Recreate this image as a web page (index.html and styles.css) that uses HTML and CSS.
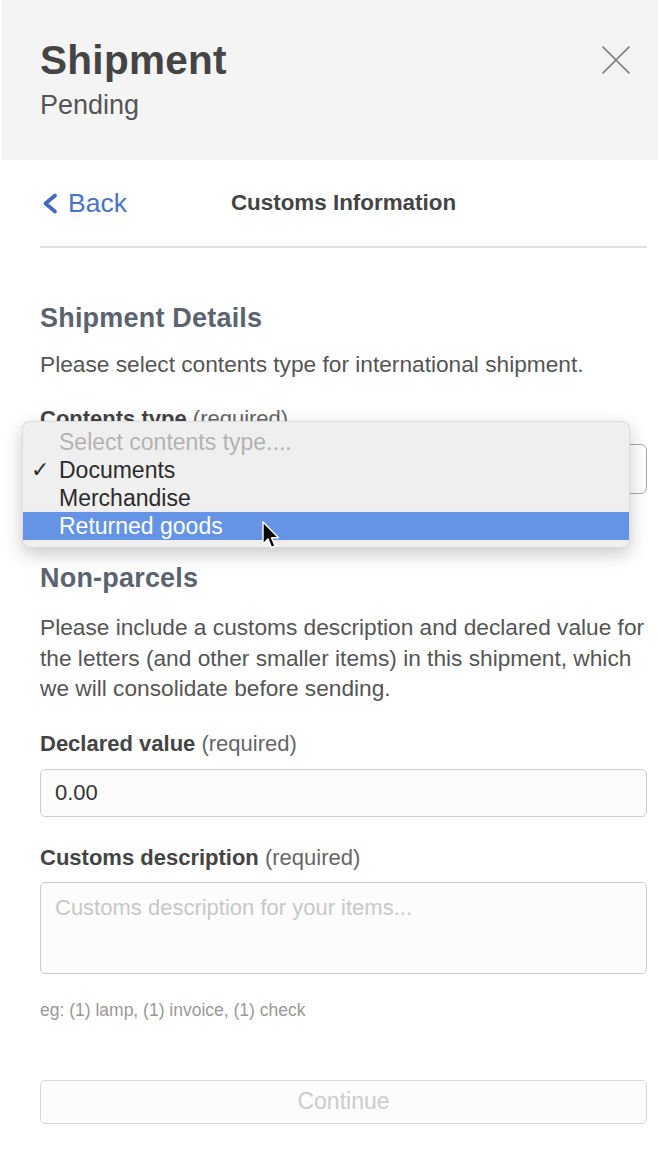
FILE: index.html
```html
<!DOCTYPE html>
<html>
<head>
    <meta charset="UTF-8">
    <title>Shipment - Customs Information</title>
    <link rel="stylesheet" href="styles.css">
</head>
<body>
    <div class="header">
        <div>
            <h1>Shipment</h1>
            <div class="status">Pending</div>
        </div>
        <svg class="close" width="30" height="30" viewBox="0 0 30 30">
            <path d="M1.5 1.5 L28.5 28.5 M28.5 1.5 L1.5 28.5" stroke="#777" stroke-width="1.6" fill="none"/>
        </svg>
    </div>

    <div class="main">
        <div class="nav">
            <a class="back" href="#">
                <svg width="17" height="21" viewBox="0 0 17 21">
                    <polyline points="14,2.5 4.5,10.5 14,18.5" stroke="#3f68c0" stroke-width="3.6" fill="none" stroke-linecap="round" stroke-linejoin="round"/>
                </svg>
                Back
            </a>
            <div class="nav-title">Customs Information</div>
            <div></div>
        </div>

        <h2>Shipment Details</h2>
        <p class="intro">Please select contents type for international shipment.</p>

        <div class="field field-select">
            <label><b>Contents type</b> (required)</label>
            <div class="select-box"></div>

            <!-- open native dropdown -->
            <div class="menu">
                <div class="menu-item placeholder">Select contents type....</div>
                <div class="menu-item"><span class="check">✓</span>Documents</div>
                <div class="menu-item">Merchandise</div>
                <div class="menu-item active">Returned goods</div>
                <svg class="cursor" width="19" height="29" viewBox="0 0 19 29">
                    <path d="M1 1 L1 23 L6 18 L9.5 26.5 L13 25 L9.5 16.8 L16.5 16.8 Z" fill="#000" stroke="#fff" stroke-width="1.4" stroke-linejoin="round"/>
                </svg>
            </div>
        </div>

        <h2 class="second">Non-parcels</h2>
        <p class="intro long">Please include a customs description and declared value for the letters (and other smaller items) in this shipment, which we will consolidate before sending.</p>

        <div class="field">
            <label><b>Declared value</b> (required)</label>
            <input class="input" type="text" value="0.00">
        </div>

        <div class="field field-desc">
            <label><b>Customs description</b> (required)</label>
            <textarea class="input textarea" placeholder="Customs description for your items..."></textarea>
        </div>
        <div class="hint">eg: (1) lamp, (1) invoice, (1) check</div>

        <button class="continue" disabled>Continue</button>
    </div>
</body>
</html>
```

FILE: styles.css
```css
body {
    margin: 0;
    font-family: "Liberation Sans", Arial, Helvetica, sans-serif;
    color: #555;
    background: #fff;
}
.header {
    margin-left: 2px;
    height: 160px;
    box-sizing: border-box;
    padding: 37px 27px 0 38px;
    background: #f4f4f4;
    display: flex;
    justify-content: space-between;
    align-items: flex-start;
}
.header h1 {
    margin: 0;
    font-size: 40.5px;
    line-height: 46px;
    color: #444;
    letter-spacing: 0.3px;
}
.status {
    margin-top: 7px;
    font-size: 27px;
    line-height: 30px;
    color: #555;
}
.close {
    margin-top: 8px;
}
.main {
    padding: 0 11px 0 40px;
}
.nav {
    height: 86px;
    display: grid;
    grid-template-columns: 1fr auto 1fr;
    align-items: center;
    border-bottom: 2px solid #e0e0e0;
}
.back {
    display: flex;
    align-items: center;
    gap: 10px;
    margin-left: 1px;
    font-size: 26.5px;
    color: #4a72c6;
    text-decoration: none;
}
.nav-title {
    font-size: 22.4px;
    font-weight: bold;
    color: #444;
}
h2 {
    margin: 53px 0 0;
    font-size: 27px;
    line-height: 34px;
    color: #5b6371;
    letter-spacing: 0.2px;
}
h2.second {
    margin-top: 68px;
    line-height: 32px;
}
.intro {
    margin: 14px 0 0;
    font-size: 22.7px;
    line-height: 30px;
    color: #555;
}
.intro.long {
    margin-top: 18px;
    line-height: 30.5px;
}
.field {
    margin-top: 27px;
}
.field-select {
    position: relative;
    margin-top: 27px;
}
.field-desc {
    margin-top: 28px;
}
label {
    display: block;
    font-size: 22px;
    line-height: 26px;
    color: #666;
}
label b {
    color: #444;
}
.select-box {
    margin-top: 12px;
    height: 50px;
    box-sizing: border-box;
    border: 1px solid #aaa;
    border-radius: 6px;
    background: #fff;
}
.input {
    display: block;
    width: 100%;
    box-sizing: border-box;
    margin-top: 12px;
    height: 48px;
    padding: 0 14px;
    border: 1px solid #ccc;
    border-radius: 5px;
    background: #fcfcfc;
    font-family: inherit;
    font-size: 22px;
    color: #333;
}
.textarea {
    margin-top: 11px;
    height: 92px;
    padding: 12px 14px;
    resize: none;
}
.textarea::placeholder {
    color: #c8c8c8;
}
.hint {
    margin-top: 26px;
    font-size: 17.5px;
    line-height: 20px;
    color: #999;
}
.continue {
    display: block;
    width: 100%;
    margin-top: 60px;
    height: 44px;
    border: 1px solid #d8d8d8;
    border-radius: 5px;
    background: #fcfcfc;
    font-family: inherit;
    font-size: 23px;
    color: #ccc;
}
.menu {
    position: absolute;
    top: 15px;
    left: -18px;
    width: 608px;
    box-sizing: border-box;
    padding: 6px 0 7px;
    background: #efefef;
    border: 1px solid rgba(0, 0, 0, 0.08);
    border-radius: 8px;
    box-shadow: 0 6px 18px rgba(0, 0, 0, 0.22);
}
.menu-item {
    position: relative;
    height: 28px;
    line-height: 28px;
    padding-left: 36px;
    font-size: 23px;
    color: #2b2b2b;
}
.menu-item.placeholder {
    color: #b3b3b3;
}
.menu-item.active {
    background: #6594e6;
    color: #fff;
}
.check {
    position: absolute;
    left: 8px;
    font-size: 22px;
}
.cursor {
    position: absolute;
    left: 239px;
    top: 99px;
}
```
